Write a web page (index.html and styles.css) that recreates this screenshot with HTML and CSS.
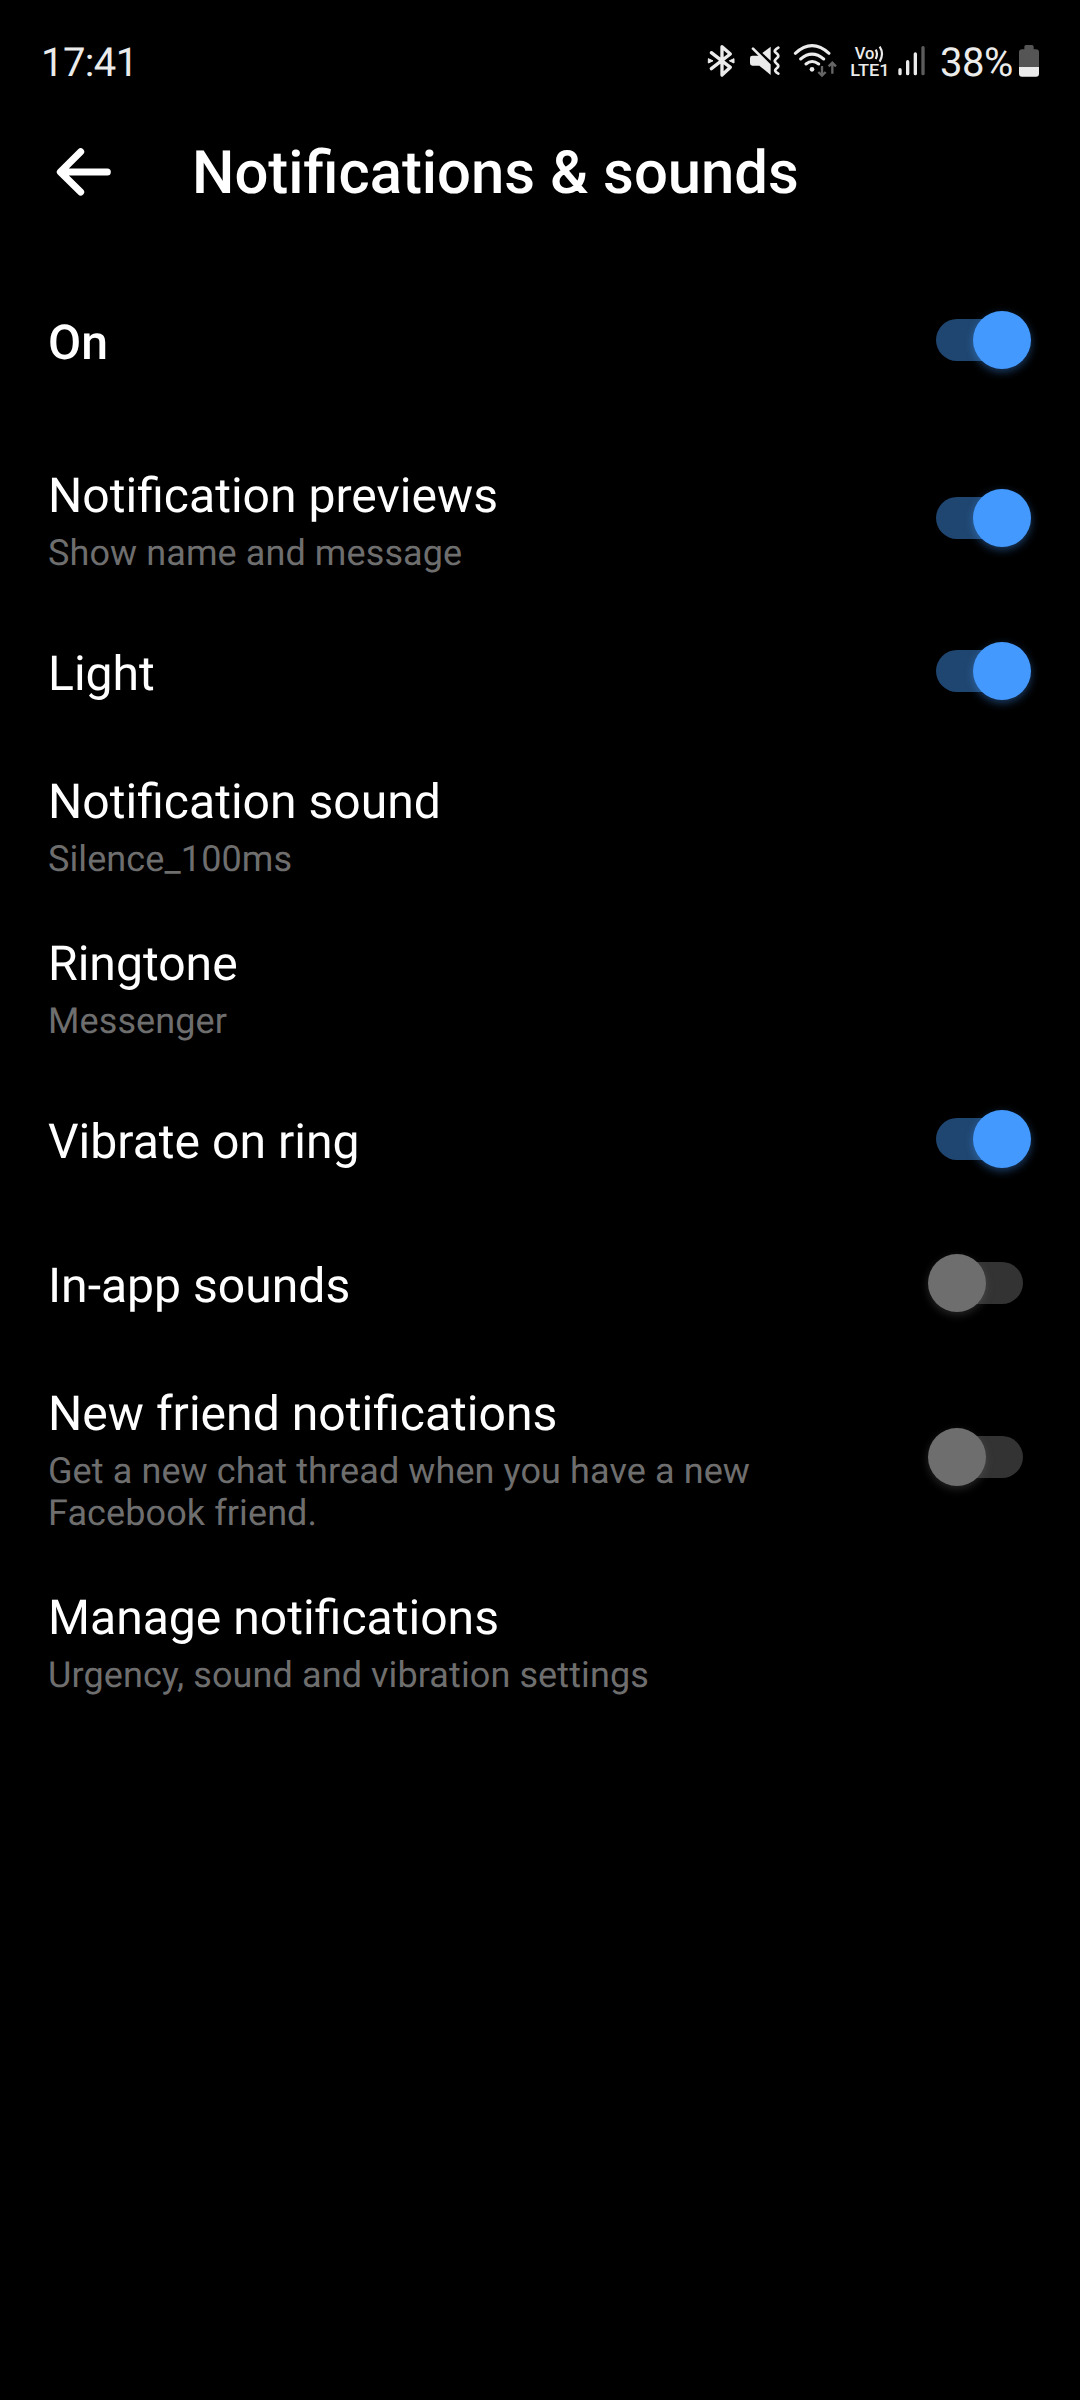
FILE: index.html
```html
<!doctype html>
<html lang="en">
<head>
    <meta charset="UTF-8">
    <title>Notifications &amp; sounds</title>
    <link rel="stylesheet" href="styles.css">
</head>
<body>
    <div class="status">
        <span class="clock">17:41</span>
        <div class="status-icons">
            <!-- bluetooth -->
            <svg class="icon-bt" width="28" height="34" viewBox="51 42 84 102">
                <path d="M64 68L121 112L96 135V50L121 72L64 116" fill="none" stroke="#ebebeb" stroke-width="10" stroke-linecap="round" stroke-linejoin="round"/>
                <path d="M55 86V99L69 92.500ZM132 86V99L118 92.500Z" fill="#ebebeb" stroke="#ebebeb" stroke-width="3" stroke-linejoin="round"/>
            </svg>
            <!-- vibrate, sound off -->
            <svg class="icon-mute" width="30" height="34" viewBox="180 42 90 102">
                <path d="M187 77H208L242 108V135L208 107H187Q180 107 180 100V84Q180 77 187 77Z" fill="#ebebeb"/>
                <path d="M217 69L242 50V92Z" fill="#ebebeb"/>
                <path d="M189 56L238 105" fill="none" stroke="#ebebeb" stroke-width="8" stroke-linecap="round"/>
                <path d="M265 53Q250 62 256 67L262 72Q268 78 262 83L257 88Q252 93 257 98L262 103Q268 108 262 113L257 118Q252 124 265 131" fill="none" stroke="#ebebeb" stroke-width="8" stroke-linecap="round" stroke-linejoin="round"/>
            </svg>
            <!-- wifi -->
            <svg class="icon-wifi" width="45" height="34" viewBox="309 42 135 102">
                <path d="M316 70Q366 24 417 70M332 87Q366 58 401 87M348 102Q366 87 386 102" fill="none" stroke="#ebebeb" stroke-width="9" stroke-linecap="round"/>
                <circle cx="366" cy="118" r="7" fill="#ebebeb"/>
                <path d="M396 108V136M385 126L396 137L407 126M427 131V99M416 109L427 98L438 109" fill="none" stroke="#666" stroke-width="7"/>
            </svg>
            <!-- volte -->
            <svg class="icon-lte" width="42" height="42" viewBox="477 30 126 126">
                <text class="lte-text" x="494" y="88" textLength="59" lengthAdjust="spacingAndGlyphs">Vo</text>
                <text class="lte-text" x="481" y="138" textLength="118" lengthAdjust="spacingAndGlyphs">LTE1</text>
                <path d="M557 59Q565 72 557 87M569 50Q583 71 569 95" fill="none" stroke="#ebebeb" stroke-width="6.500"/>
            </svg>
            <!-- signal -->
            <svg class="icon-signal" width="27" height="34" viewBox="84 42 81 102">
                <path d="M90 119V131M113 95V131M136 72V131" fill="none" stroke="#ebebeb" stroke-width="10" stroke-linecap="round"/>
                <path d="M159 53V131" fill="none" stroke="#5c5c5c" stroke-width="10" stroke-linecap="round"/>
            </svg>
            <span class="percent">38%</span>
            <!-- battery -->
            <svg class="icon-battery" width="20" height="34" viewBox="447 42 60 102">
                <path d="M463 58V50Q463 45 468 45H486Q491 45 491 50V58H498Q507 58 507 67V111H447V67Q447 58 456 58Z" fill="#555"/>
                <path d="M447 111H507V131Q507 140 498 140H456Q447 140 447 131Z" fill="#ebebeb"/>
            </svg>
        </div>
    </div>
    <div class="header">
        <svg class="back" width="56" height="52" viewBox="168 378 168 156">
            <path d="M322 456H184M242 395L181 456L242 516" fill="none" stroke="#fff" stroke-width="21" stroke-linecap="round" stroke-linejoin="round"/>
        </svg>
        <h1>Notifications &amp; sounds</h1>
    </div>
    <ul class="list">
        <li class="main">
            <div class="text"><p class="name">On</p></div>
            <span class="switch on"></span>
        </li>
        <li>
            <div class="text">
                <p class="name">Notification previews</p>
                <p class="desc">Show name and message</p>
            </div>
            <span class="switch on"></span>
        </li>
        <li>
            <div class="text"><p class="name">Light</p></div>
            <span class="switch on"></span>
        </li>
        <li>
            <div class="text">
                <p class="name">Notification sound</p>
                <p class="desc">Silence_100ms</p>
            </div>
        </li>
        <li>
            <div class="text">
                <p class="name">Ringtone</p>
                <p class="desc">Messenger</p>
            </div>
        </li>
        <li>
            <div class="text"><p class="name">Vibrate on ring</p></div>
            <span class="switch on"></span>
        </li>
        <li>
            <div class="text"><p class="name">In-app sounds</p></div>
            <span class="switch"></span>
        </li>
        <li>
            <div class="text">
                <p class="name">New friend notifications</p>
                <p class="desc">Get a new chat thread when you have a new Facebook friend.</p>
            </div>
            <span class="switch"></span>
        </li>
        <li>
            <div class="text">
                <p class="name">Manage notifications</p>
                <p class="desc">Urgency, sound and vibration settings</p>
            </div>
        </li>
    </ul>
</body>
</html>
```
FILE: styles.css
```css
*{
    margin: 0;
    padding: 0;
    box-sizing: border-box;
}
body{
    width: 1080px;
    min-height: 2400px;
    background: #000;
    color: #fff;
    font-family: Roboto, "Liberation Sans", sans-serif;
    text-rendering: geometricPrecision;
}
li{
    list-style: none;
}
svg{
    display: block;
    flex: none;
}
/* status bar */
.status{
    height: 100px;
    padding: 22px 41px 0 41px;
    display: flex;
    justify-content: space-between;
    align-items: center;
    color: #ebebeb;
    font-size: 40px;
    line-height: 48px;
}
.clock{
    padding-top: 4px;
    letter-spacing: -0.6px;
}
.status-icons{
    display: flex;
    align-items: center;
}
.icon-mute{
    margin-left: 15px;
}
.icon-wifi{
    margin-left: 13px;
}
.icon-lte{
    margin-left: 11px;
    overflow: visible;
}
.icon-signal{
    margin-left: 7px;
}
.percent{
    width: 79px;
    margin-left: 15px;
    padding-top: 4px;
    letter-spacing: -0.5px;
}
.lte-text{
    font-size: 51px;
    font-weight: 500;
    fill: #ebebeb;
}
/* title bar */
.header{
    height: 144px;
    padding-left: 56px;
    display: flex;
    align-items: center;
}
.header h1{
    margin-left: 80px;
    padding-top: 2px;
    font-size: 59.8px;
    font-weight: 500;
    line-height: 70px;
}
/* settings */
.list{
    padding-top: 27px;
}
.list li{
    min-height: 144px;
    padding: 28px 57px 28px 48px;
    display: flex;
    justify-content: space-between;
    align-items: center;
}
.list .main{
    margin-bottom: 25px;
}
.main .name{
    font-weight: 500;
}
.text{
    width: 780px;
}
.name{
    font-size: 48.1px;
    line-height: 56px;
}
.desc{
    margin-top: 8px;
    color: #6e6e6e;
    font-size: 36px;
    line-height: 42px;
    letter-spacing: 0.1px;
}
.switch{
    position: relative;
    width: 87px;
    height: 42px;
    margin-bottom: 6px;
    border-radius: 21px;
    background: #333;
}
/* the knob sticks out over the track */
.switch:after{
    content: "";
    position: absolute;
    top: -8px;
    left: -8px;
    width: 58px;
    height: 58px;
    border-radius: 50%;
    background: #6e6e6e;
    box-shadow: 0 3px 8px rgba(110,110,110,.35);
}
.on{
    background: #1f4670;
}
.on:after{
    left: 37px;
    background: #4499ff;
    box-shadow: 0 3px 8px rgba(68,153,255,.4);
}
```
